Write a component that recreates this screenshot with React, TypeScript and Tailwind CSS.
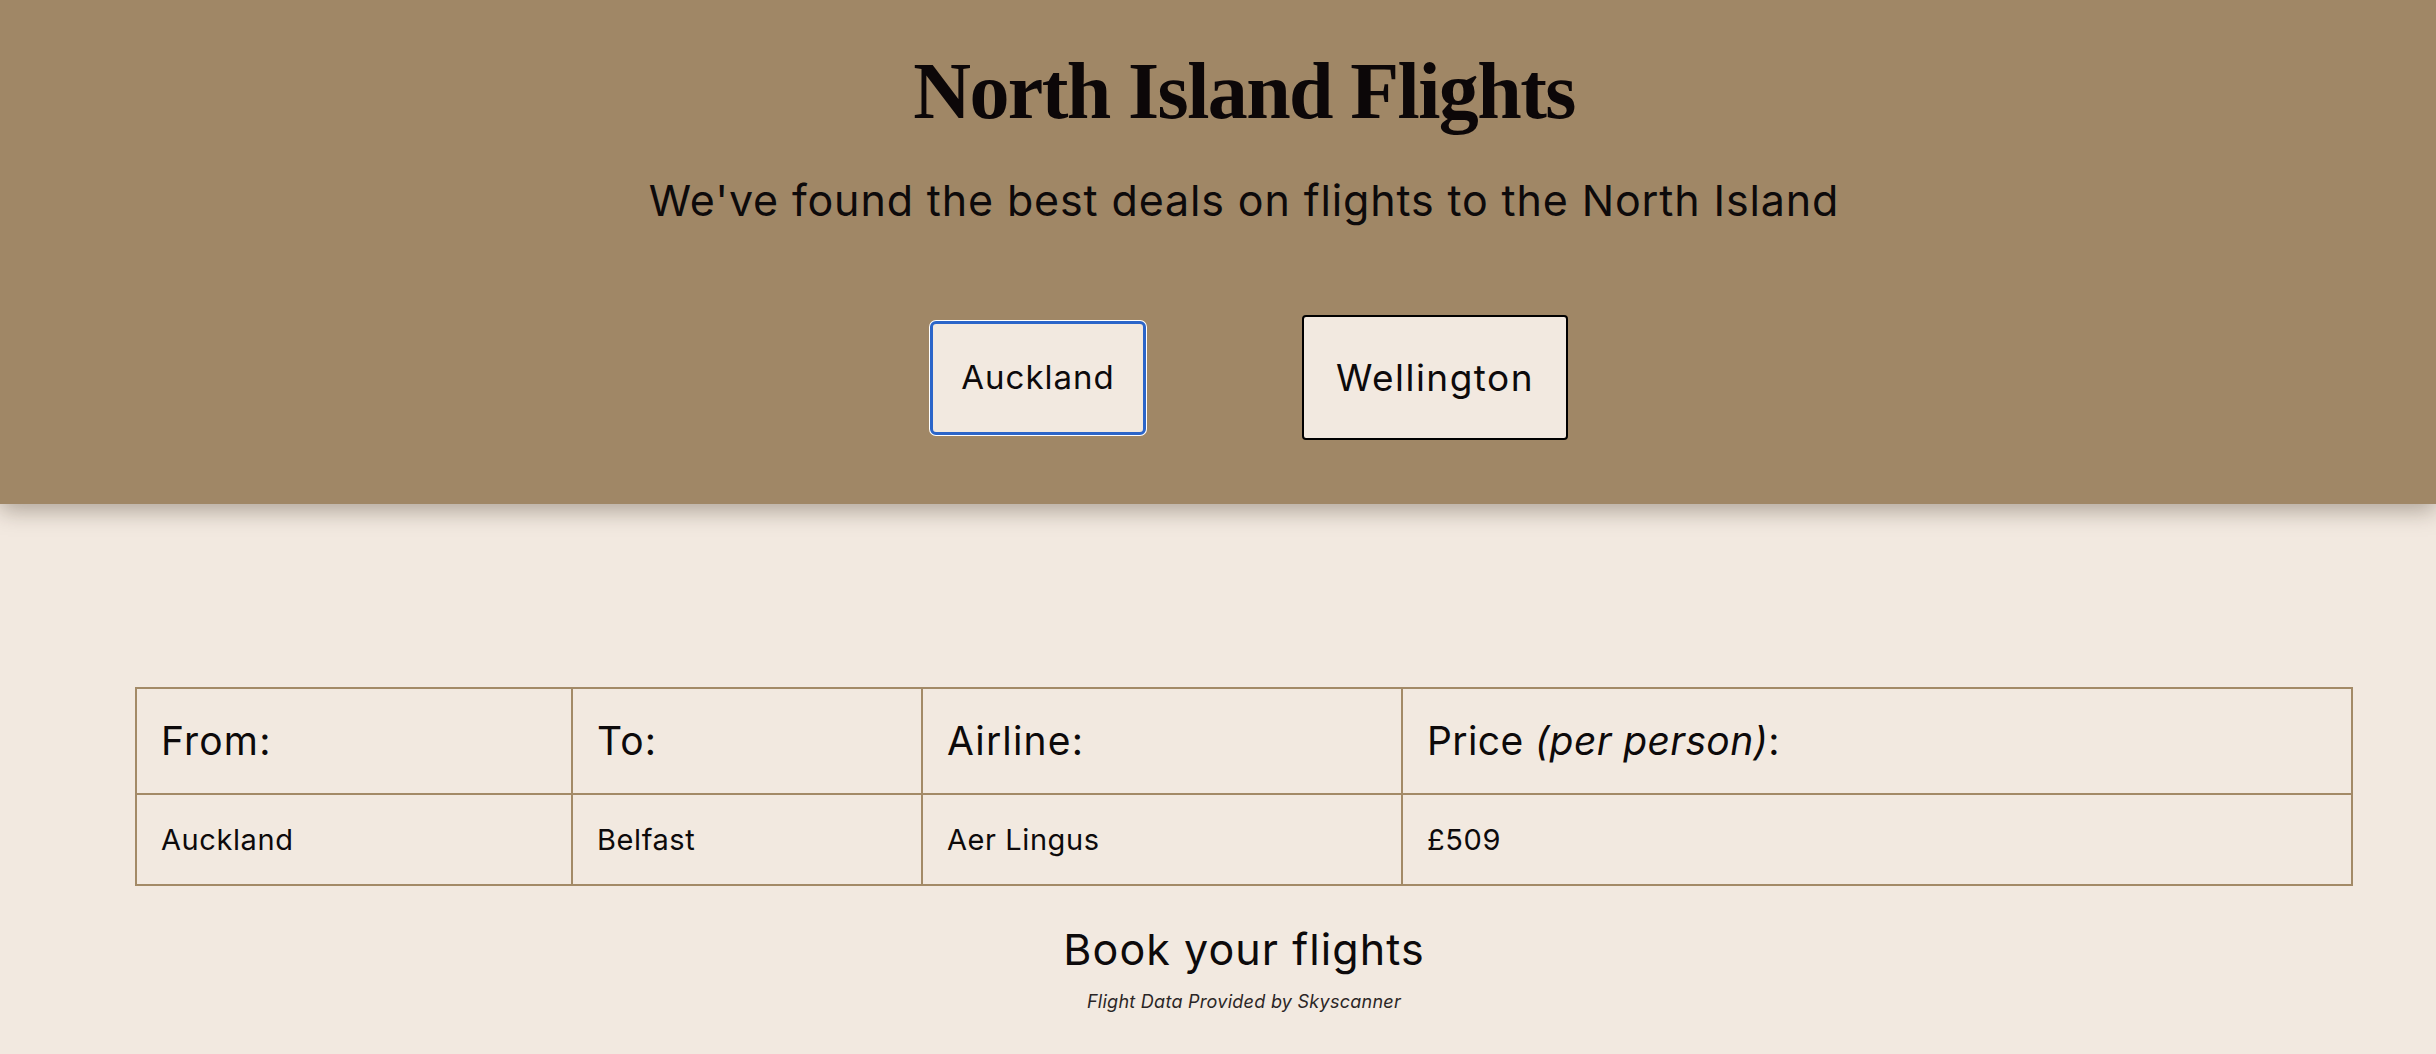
import React from 'react';

const sans = "font-['Inter','Liberation_Sans',sans-serif]";

const flights = [
  { from: 'Auckland', to: 'Belfast', airline: 'Aer Lingus', price: '£509' },
];

export default function App() {
  return (
    <div className={`min-h-screen bg-[#f2e9e0] text-[#0d0a0b] ${sans}`}>
      {/* Header */}
      <header className="relative z-10 h-[504px] bg-[#a08766] pl-[52px] shadow-[0_6px_22px_rgba(40,25,10,0.35)] flex flex-col items-center">
        <h1 className="pt-[51px] text-[80px] leading-none font-bold tracking-[-0.02em] text-[#0c0708] font-['Liberation_Serif',serif]">
          North Island Flights
        </h1>
        <p className="mt-[48px] text-[43px] leading-none tracking-[0.02em]">
          We've found the best deals on flights to the North Island
        </p>
        <div className="mt-[93px] pl-[10px] flex items-center gap-[156px]">
          <button className="w-[216px] h-[114px] rounded-[6px] border-[3px] border-[#2b65c9] bg-[#f2e9e0] shadow-[0_0_0_1px_#ffffff] text-[33px] tracking-[0.03em]">
            Auckland
          </button>
          <button className="w-[266px] h-[125px] rounded-[4px] border-2 border-black bg-[#f2e9e0] text-[37px] tracking-[0.04em]">
            Wellington
          </button>
        </div>
      </header>

      {/* Results */}
      <main className="pl-[52px] pb-10 flex flex-col items-center">
        <div className="self-stretch mx-[83px] mt-[183px]">
          <table className="w-full table-fixed border-collapse border-2 border-[#a38a67] text-left">
            <colgroup>
              <col className="w-[436px]" />
              <col className="w-[350px]" />
              <col className="w-[480px]" />
              <col />
            </colgroup>
            <thead>
              <tr className="h-[106px]">
                <th className="border-2 border-[#a38a67] pl-[24px] text-[39px] tracking-[0.03em] font-normal">From:</th>
                <th className="border-2 border-[#a38a67] pl-[24px] text-[39px] tracking-[0.03em] font-normal">To:</th>
                <th className="border-2 border-[#a38a67] pl-[24px] text-[39px] tracking-[0.03em] font-normal">Airline:</th>
                <th className="border-2 border-[#a38a67] pl-[24px] text-[39px] tracking-[0.01em] font-normal">
                  Price <span className="italic">(per person)</span>:
                </th>
              </tr>
            </thead>
            <tbody>
              {flights.map((f, i) => (
                <tr key={i} className="h-[91px]">
                  <td className="border-2 border-[#a38a67] pl-[24px] text-[29px] tracking-[0.02em]">{f.from}</td>
                  <td className="border-2 border-[#a38a67] pl-[24px] text-[29px] tracking-[0.02em]">{f.to}</td>
                  <td className="border-2 border-[#a38a67] pl-[24px] text-[29px] tracking-[0.02em]">{f.airline}</td>
                  <td className="border-2 border-[#a38a67] pl-[24px] text-[29px] tracking-[0.02em]">{f.price}</td>
                </tr>
              ))}
            </tbody>
          </table>
        </div>
        <p className="mt-[42px] text-[43px] leading-none tracking-[0.025em]">Book your flights</p>
        <p className="mt-[22px] text-[18px] leading-none italic tracking-[0.015em] text-[#2b2626]">
          Flight Data Provided by Skyscanner
        </p>
      </main>
    </div>
  );
}
